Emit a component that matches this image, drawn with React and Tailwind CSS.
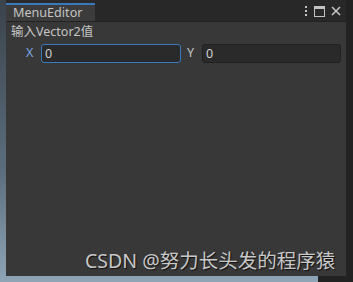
export default function App() {
  return (
    <div
      className="w-[353px] h-[282px] flex flex-col bg-[linear-gradient(180deg,#3b434c_0%,#5b6d7c_60%,#8fa5b6_100%)] overflow-hidden"
      style={{ fontFamily: '"Noto Sans", "Noto Sans CJK SC", sans-serif' }}
    >
      <div className="flex flex-1">
        <div className="w-[6px] shrink-0" />
        {/* editor window */}
        <div className="w-[340px] shrink-0 flex flex-col bg-[#383838] relative">
          <div className="h-[22px] flex bg-[#282828] border-b border-[#222]">
            <div className="w-[89px] flex flex-col bg-[#3c3c3c]">
              <div className="h-[3px] bg-[#2a2a2a]" />
              <div className="h-[2px] bg-[#3a79bb]" />
              <div className="pl-[7px] text-[12.6px] leading-[16px] text-[#c4c4c4]">MenuEditor</div>
            </div>
            <div className="flex-1" />
            <div className="flex items-center gap-[6px] pr-[5px] pt-[1px]">
              <svg width="4" height="12" viewBox="0 0 4 12" fill="#c4c4c4">
                <rect x="1" y="1" width="2" height="2" />
                <rect x="1" y="5" width="2" height="2" />
                <rect x="1" y="9" width="2" height="2" />
              </svg>
              <svg width="11" height="11" viewBox="0 0 11 11" fill="none" stroke="#c4c4c4">
                <rect x="0.5" y="0.5" width="10" height="10" />
                <line x1="0" y1="2" x2="11" y2="2" strokeWidth="2" />
              </svg>
              <svg width="10" height="10" viewBox="0 0 10 10" stroke="#c4c4c4" strokeWidth="1.6">
                <line x1="1" y1="1" x2="9" y2="9" />
                <line x1="9" y1="1" x2="1" y2="9" />
              </svg>
            </div>
          </div>
          <div className="pl-[5px] pt-[1px] text-[12.5px] leading-[18px] text-[#c4c4c4]">输入Vector2值</div>
          <div className="flex items-center pl-[20px] pr-[5px] mt-[2px] h-[20px] text-[12.5px] text-[#c4c4c4]">
            <span className="w-[15px] text-[#7ba7e0]">X</span>
            <div className="w-[140px] h-[19px] rounded-[3px] border border-[#3a79bb] bg-[#2a2a2a] pl-[3px] leading-[17px] text-[#d2d2d2]">0</div>
            <span className="w-[21px] pl-[6px]">Y</span>
            <div className="flex-1 h-[19px] rounded-[3px] border border-[#212121] bg-[#2a2a2a] pl-[3px] leading-[17px] text-[#d2d2d2]">0</div>
          </div>
          <div className="flex-1" />
          <div className="absolute left-[79px] top-[248px] text-[19.5px] leading-[26px] text-[#c8c8c8] [text-shadow:1px_1px_1px_#111]">
            CSDN @努力长头发的程序猿
          </div>
        </div>
        <div className="flex-1 bg-[#222]" />
      </div>
      <div className="h-[6px] flex">
        <div className="w-[318px]" />
        <div className="flex-1 bg-[#222]" />
      </div>
    </div>
  )
}
